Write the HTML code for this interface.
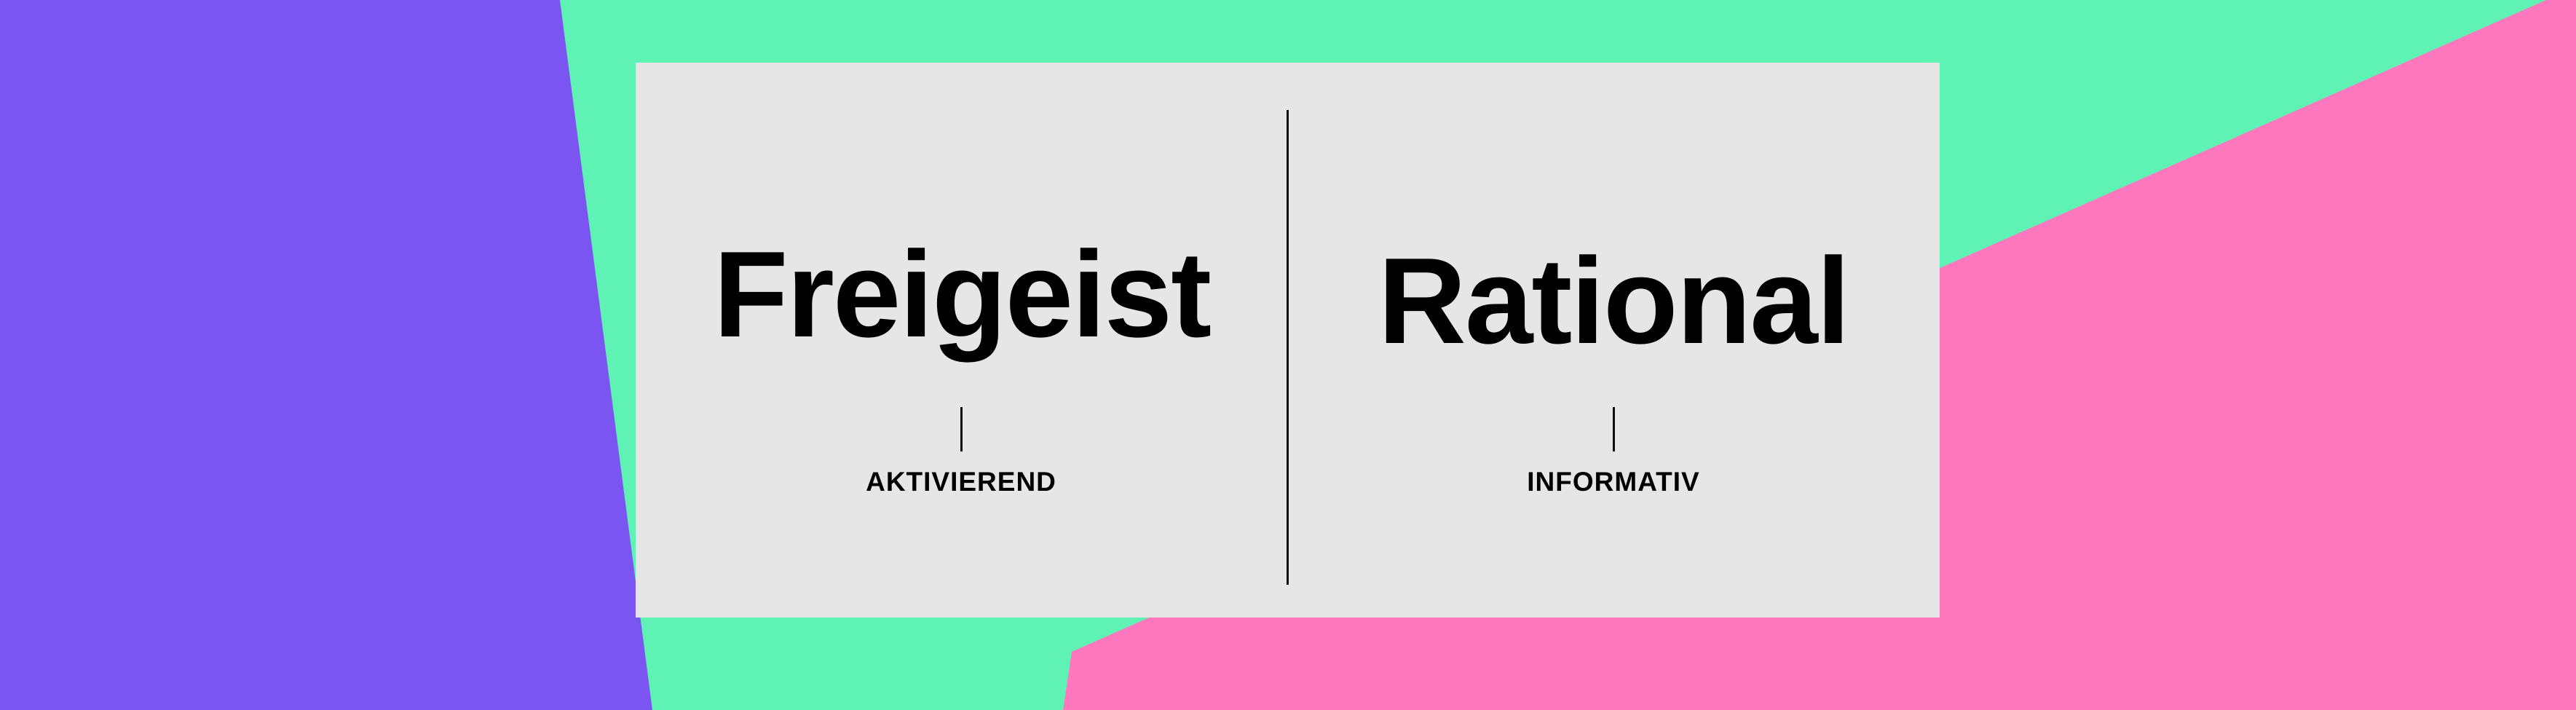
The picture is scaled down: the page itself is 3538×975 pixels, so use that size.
<!DOCTYPE html>
<html><head><meta charset="utf-8"><style>
html,body{margin:0;padding:0;width:3538px;height:975px;overflow:hidden;background:#5ef3b4;font-family:"Liberation Sans",sans-serif}
svg{position:absolute;left:0;top:0}
.card{position:absolute;left:873px;top:86px;width:1791px;height:762px;background:#e6e6e6}
.div{position:absolute;left:1767px;top:151px;width:3px;height:652px;background:#111}
.t{position:absolute;font-weight:bold;font-size:168px;line-height:1;color:#000;text-align:center;width:900px;letter-spacing:-2px}
.s{position:absolute;width:3px;height:61px;background:#111;top:559px}
.l{position:absolute;font-weight:bold;font-size:37px;line-height:1;text-align:center;width:600px;letter-spacing:1px;color:#000}
</style></head><body>
<svg width="3538" height="975">
<polygon points="0,0 769,0 896,975 0,975" fill="#7b55f1"/>
<polygon points="3497,0 3538,0 3538,975 1460,975 1472,895" fill="#ff78bd"/>
</svg>
<div class="card"></div>
<div class="div"></div>
<div class="t" style="left:871px;top:320px">Freigeist</div>
<div class="t" style="left:1766px;top:329px">Rational</div>
<div class="s" style="left:1319px"></div>
<div class="s" style="left:2215px"></div>
<div class="l" style="left:1020px;top:643px">AKTIVIEREND</div>
<div class="l" style="left:1916px;top:643px">INFORMATIV</div>
</body></html>
